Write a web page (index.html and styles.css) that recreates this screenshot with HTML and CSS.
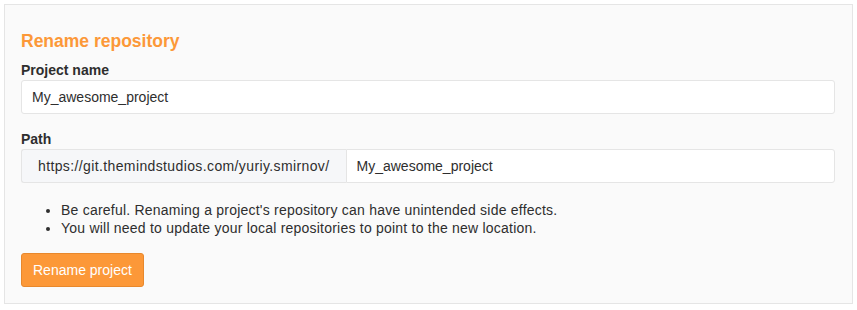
FILE: index.html
```html
<!DOCTYPE html>
<html>
<head>
<meta charset="utf-8">
<link rel="stylesheet" href="styles.css">
</head>
<body>
<div class="panel">
  <h4 class="title">Rename repository</h4>
  <div class="group">
    <label class="label">Project name</label>
    <div class="input">My_awesome_project</div>
  </div>
  <div class="group">
    <label class="label">Path</label>
    <div class="input-group">
      <div class="addon">https://git.themindstudios.com/yuriy.smirnov/</div>
      <div class="input joined">My_awesome_project</div>
    </div>
  </div>
  <ul class="notes">
    <li>Be careful. Renaming a project's repository can have unintended side effects.</li>
    <li>You will need to update your local repositories to point to the new location.</li>
  </ul>
  <button class="btn">Rename project</button>
</div>
</body>
</html>
```

FILE: styles.css
```css
html, body {
  margin: 0;
  padding: 0;
  background: #fff;
}
body {
  padding: 4px;
  font-family: "Liberation Sans", Arial, sans-serif;
  font-size: 14px;
  color: #2e2e2e;
}
.panel {
  background: #fafafa;
  border: 1px solid #e5e5e5;
  padding: 25px 17px 16px 16px;
}
.title {
  margin: 0 0 8px;
  font-size: 17.5px;
  line-height: 22px;
  font-weight: bold;
  color: #fc9838;
}
.group {
  margin-bottom: 15px;
}
.label {
  display: block;
  font-weight: bold;
  line-height: 20px;
}
.input {
  box-sizing: border-box;
  height: 34px;
  line-height: 32px;
  padding: 0 10px;
  background: #fff;
  border: 1px solid #e5e5e5;
  border-radius: 3px;
}
.input-group {
  display: flex;
}
.addon {
  box-sizing: border-box;
  height: 34px;
  line-height: 32px;
  padding: 0 16px;
  letter-spacing: 0.38px;
  background: #f6f7f9;
  border: 1px solid #e5e5e5;
  border-right: none;
  border-radius: 3px 0 0 3px;
}
.input.joined {
  flex: 1;
  border-radius: 0 3px 3px 0;
}
.notes {
  margin: 18px 0 16px;
  padding-left: 40px;
  line-height: 18px;
  letter-spacing: 0.22px;
}
.btn {
  display: block;
  box-sizing: border-box;
  height: 34px;
  padding: 0 11px;
  font-family: inherit;
  font-size: 14px;
  color: #fff;
  background: #fc9838;
  border: 1px solid #e8882c;
  border-radius: 3px;
}
```
